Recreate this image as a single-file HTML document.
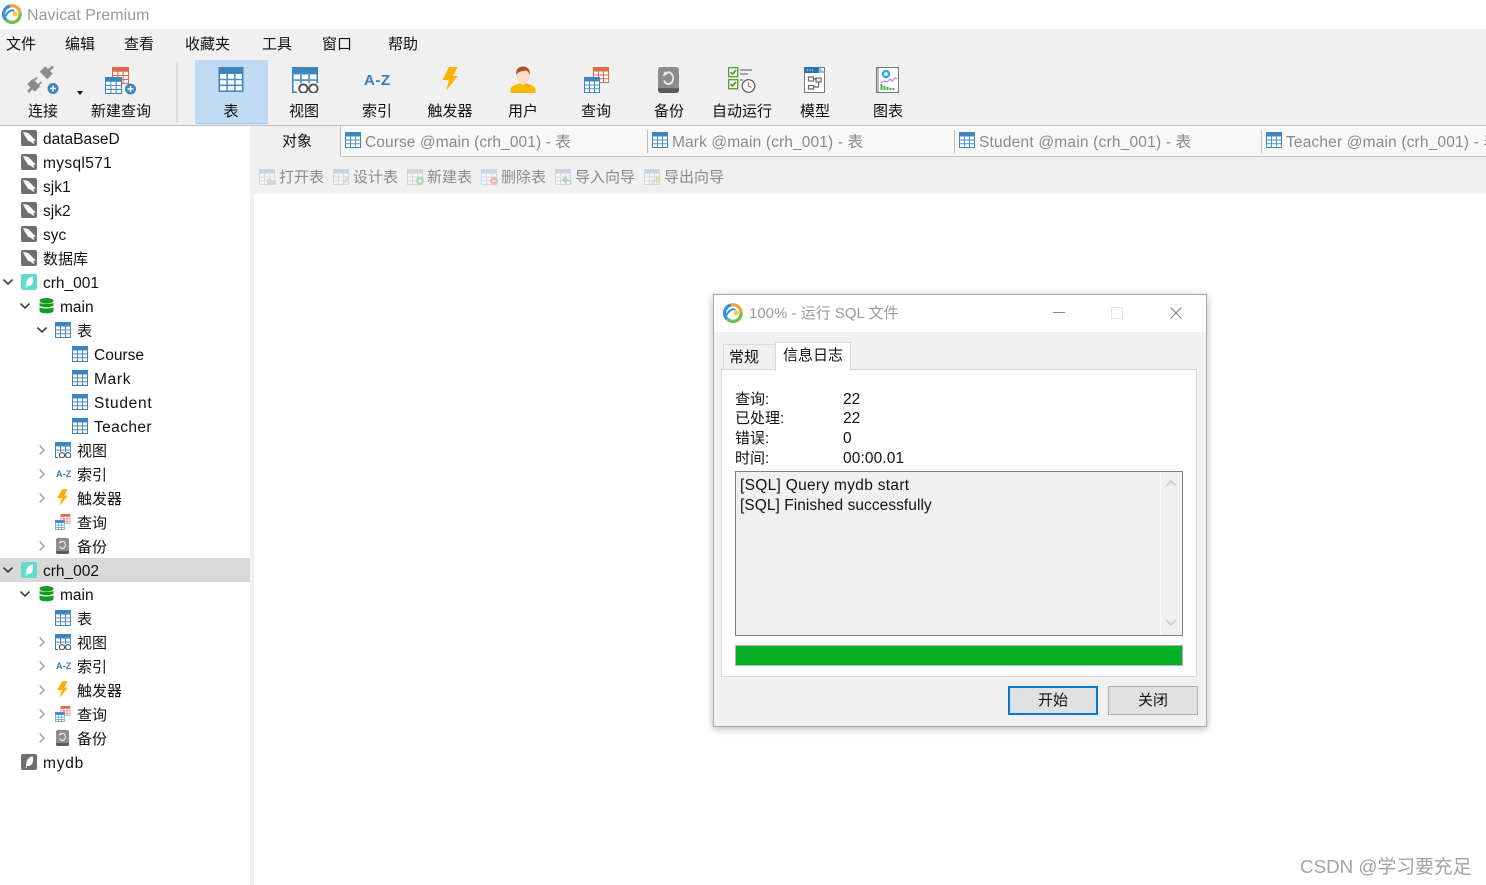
<!DOCTYPE html>
<html lang="zh"><head><meta charset="utf-8"><title>Navicat Premium</title>
<style>
html,body{margin:0;padding:0;background:#fff}
#p{position:relative;width:1486px;height:885px;overflow:hidden;background:#fff;font-family:"Liberation Sans","Noto Sans CJK SC",sans-serif;color:#111}
.b{position:absolute}
.t{position:absolute;white-space:nowrap;line-height:20px;font-size:15px}
.c{transform:translateX(-50%)}
.r{position:absolute;left:0;width:250px;height:24px}
.r .t{top:4px;font-size:15.5px}
.r .t.k{top:4px;font-size:15px}
.r .t.az{top:2px;left:56px;font:bold 9px/20px "Liberation Sans",sans-serif;color:#3a7ab5;letter-spacing:.1px}
svg{position:absolute;overflow:visible}
.r svg{top:4px}
.g{color:#8a8a8a}
.ti{opacity:.75}
</style></head><body>
<div id="p">
<svg width="0" height="0" style="position:absolute">
<defs>
<symbol id="tb" viewBox="0 0 16 16"><rect x=".5" y=".5" width="15" height="15" fill="#fff" stroke="#3d85c0"/><rect width="16" height="4.5" rx="1" fill="#3d85c0"/><path d="M5.5 4v11M10.5 4v11M1 8h14M1 11.7h14" stroke="#4a8fcb" fill="none"/></symbol>
<symbol id="rd" viewBox="0 0 16 16"><rect x=".5" y=".5" width="15" height="15" fill="#fff" stroke="#dd6a4e"/><rect width="16" height="4.5" rx="1" fill="#dd6a4e"/><path d="M5.5 4v11M10.5 4v11M1 8h14M1 11.7h14" stroke="#dd6a4e" fill="none"/></symbol>
<symbol id="tf" viewBox="0 0 16 16"><rect x=".5" y=".5" width="15" height="15" fill="#f7f7f7" stroke="#c3ced8"/><rect width="16" height="4.5" fill="#bccbd8"/><path d="M5.5 4v11M10.5 4v11M1 8h14M1 11.7h14" stroke="#c9d4de" fill="none"/></symbol>
<symbol id="vw" viewBox="0 0 16 16"><rect x=".5" y=".5" width="15" height="15" fill="#fff" stroke="#3d85c0"/><rect width="16" height="4.5" rx="1" fill="#3d85c0"/><path d="M5.5 4v7M10.5 4v7M1 8h14" stroke="#4a8fcb" fill="none"/><rect x="3" y="10" width="14" height="7" fill="#f4f4f4"/><circle cx="7" cy="13.3" r="2.6" fill="#fff" stroke="#555" stroke-width="1.2"/><circle cx="13.2" cy="13.3" r="2.6" fill="#fff" stroke="#555" stroke-width="1.2"/></symbol>
<symbol id="bolt" viewBox="0 0 16 24"><path d="M7 0h8.5L11 9h4.6L4 24l3-11H.5z" fill="#f9b000"/></symbol>
<symbol id="qr" viewBox="0 0 26 26"><use href="#rd" x="9" y="0" width="16" height="16"/><use href="#tb" x="0" y="10" width="16" height="16"/></symbol>
<symbol id="bk" viewBox="0 0 16 16" preserveAspectRatio="none"><rect width="16" height="16" rx="2" fill="#8c8c8c"/><path d="M0 13h16v1a2 2 0 0 1-2 2H2a2 2 0 0 1-2-2z" fill="#5a5a5a"/><path d="M5.2 4.6a3.6 3.6 0 1 1-.6 3.6" fill="none" stroke="#eee" stroke-width="1.2"/><path d="M3.4 5.8l3.3-1-1.6-2.2z" fill="#eee"/></symbol>
<symbol id="my" viewBox="0 0 16 16"><rect width="16" height="16" rx="2" fill="#6e6e6e"/><path d="M2 2c3 0 5.500 1 7.500 3 1.500 1.500 2.500 3 4.500 4.500l.5 1.500-2-.5c0 1.500.5 2.500 1 3.500-2-.5-3.500-1.500-4.500-3-1 .5-2 0-2.500-1C5.500 8 3 5 2 2z" fill="#fff"/></symbol>
<symbol id="lf" viewBox="0 0 16 16"><rect width="16" height="16" rx="2" fill="#5fdcd0"/><path d="M11.600 2.400c-3.600 .6-6 3.400-6.400 7-.1 1 0 1.800 .1 2.200L4.400 14l.7 .3 1-2.300c3.400 .4 5.800-1.800 6-5.400.1-1.700-.1-3.200-.5-4.200z" fill="#fff"/></symbol>
<symbol id="lg" viewBox="0 0 16 16"><rect width="16" height="16" rx="2" fill="#6e6e6e"/><path d="M11.600 2.400c-3.600 .6-6 3.400-6.400 7-.1 1 0 1.800 .1 2.200L4.400 14l.7 .3 1-2.300c3.400 .4 5.800-1.800 6-5.400.1-1.700-.1-3.200-.5-4.200z" fill="#fff"/></symbol>
<symbol id="db" viewBox="0 0 15 16"><ellipse cx="7.500" cy="2.800" rx="7" ry="2.800" fill="#0f9d1f"/><path d="M.5 4.800c1.500 1.600 12.500 1.600 14 0v2.700c-1 2.200-13 2.200-14 0z" fill="#0f9d1f"/><path d="M.5 9.300c1.500 1.600 12.500 1.600 14 0v3.700c-1 3.200-13 3.200-14 0z" fill="#0f9d1f"/></symbol>
<symbol id="logo" viewBox="0 0 22 22"><path d="M4.500 17.500A9 9 0 0 1 9 2.200" fill="none" stroke="#3b8fe0" stroke-width="3.600"/><path d="M9 2.200A9 9 0 0 1 19.900 10" fill="none" stroke="#f2a533" stroke-width="3.600"/><path d="M19.900 10A9 9 0 0 1 4.500 17.500" fill="none" stroke="#6cc24a" stroke-width="3.600"/><path d="M4 13.500C6.500 8 11 5.500 13.500 7.800" fill="none" stroke="#3b8fe0" stroke-width="2.200"/><circle cx="14.500" cy="11" r="2.800" fill="#f7c94b"/></symbol>
<symbol id="ca" viewBox="0 0 10 6"><path d="M.5 .5L5 5l4.500-4.500" fill="none" stroke="#444" stroke-width="1.700"/></symbol>
<symbol id="cr" viewBox="0 0 6 10"><path d="M.7 .5L5 5 .7 9.500" fill="none" stroke="#aaa" stroke-width="1.700"/></symbol>
</defs>
</svg>

<!-- title -->
<svg style="left:2px;top:4px" width="20" height="20"><use href="#logo" width="20" height="20"/></svg>
<div class="t" style="left:27px;top:6px;font-size:16px;letter-spacing:.05px;color:#9a9a9a">Navicat Premium</div>

<!-- menu/toolbar -->
<div class="b" style="left:0;top:29px;width:1486px;height:96px;background:#f0f0f0"></div>
<div class="b" style="left:0;top:125px;width:1486px;height:1px;background:#bdbdbd"></div>
<div class="t" style="left:6px;top:35px">文件</div>
<div class="t" style="left:65px;top:35px">编辑</div>
<div class="t" style="left:124px;top:35px">查看</div>
<div class="t" style="left:185px;top:35px">收藏夹</div>
<div class="t" style="left:262px;top:35px">工具</div>
<div class="t" style="left:322px;top:35px">窗口</div>
<div class="t" style="left:388px;top:35px">帮助</div>

<div class="b" style="left:176px;top:61px;width:2px;height:62px;background:#dcdcdc"></div>
<div class="b" style="left:195px;top:60px;width:73px;height:64px;background:#bfdbf3;border-bottom:1px solid #9cc5e8;box-sizing:border-box"></div>

<!-- connect -->
<svg style="left:28px;top:67px" width="32" height="28" viewBox="0 0 32 28">
<g stroke="#8c8c8c" fill="none">
<path d="M3 21l5.500-5.500" stroke-width="10.500"/><path d="M15.500 8.500l5.500-5.500" stroke-width="10.500"/>
<path d="M0 25l4-4M21 3l4-3.500" stroke-width="2.800"/>
<path d="M6 13.500l3-3M10.500 18l3-3" stroke-width="1.800"/></g>
<circle cx="25" cy="21.500" r="5.500" fill="#3d85c0"/><path d="M22 21.500h6M25 18.500v6" stroke="#fff" stroke-width="1.500"/></svg>
<div class="b" style="left:77px;top:91px;width:0;height:0;border:3px solid transparent;border-top:4px solid #111"></div>
<div class="t c" style="left:43px;top:102px">连接</div>
<!-- new query -->
<svg style="left:105px;top:67px" width="32" height="28" viewBox="0 0 32 28">
<use href="#rd" x="7" y="0" width="17" height="17"/><use href="#tb" x="0" y="10" width="17" height="17"/><circle cx="25.500" cy="22" r="5.500" fill="#3d85c0"/><path d="M22.500 22h6M25.500 19v6" stroke="#fff" stroke-width="1.500"/></svg>
<div class="t c" style="left:121px;top:102px">新建查询</div>

<svg style="left:218px;top:67px" width="26" height="25"><use href="#tb" width="26" height="25"/></svg>
<div class="t c" style="left:231px;top:102px">表</div>
<svg style="left:291px;top:67px" width="28" height="26"><use href="#vw" width="28" height="26"/></svg>
<div class="t c" style="left:304px;top:102px">视图</div>
<div class="t" style="left:364px;top:71px;font:bold 15px/20px 'Liberation Sans',sans-serif;color:#3a7ab5;letter-spacing:.6px">A-Z</div>
<div class="t c" style="left:377px;top:102px">索引</div>
<svg style="left:442px;top:67px" width="16" height="24"><use href="#bolt" width="16" height="24"/></svg>
<div class="t c" style="left:450px;top:102px">触发器</div>
<!-- user -->
<svg style="left:510px;top:66px" width="26" height="28" viewBox="0 0 26 28"><path d="M0 27v-4c1-3.500 5-4 8-5.500h9c3 1.500 7 2 8 5.500v4z" fill="#f8b800" transform="translate(.5 0)"/><path d="M9 16l4 3.500 4-3.500v-2H9z" fill="#fde3cf"/><ellipse cx="13" cy="9" rx="6.500" ry="8" fill="#fbdcc6"/><path d="M6.300 9C5.500 3 9 .5 13 .5S20.500 3 19.700 9c-1-3-2.500-4.500-5-4.500-2.500 1-6 .5-8.400 4.500z" fill="#a5551f"/></svg>
<div class="t c" style="left:523px;top:102px">用户</div>
<svg style="left:584px;top:67px" width="26" height="26"><use href="#qr" width="26" height="26"/></svg>
<div class="t c" style="left:596px;top:102px">查询</div>
<svg style="left:658px;top:67px" width="21" height="26"><use href="#bk" width="21" height="26"/></svg>
<div class="t c" style="left:669px;top:102px">备份</div>
<!-- auto run -->
<svg style="left:728px;top:67px" width="28" height="27" viewBox="0 0 28 27">
<g fill="#fff" stroke="#5f9f35" stroke-width="1.400"><rect x=".7" y=".7" width="9" height="9"/><rect x=".7" y="12.700" width="9" height="9"/></g>
<path d="M2.500 5l2 2 3.500-4M2.500 17l2 2 3.500-4" fill="none" stroke="#5f9f35" stroke-width="1.800"/>
<path d="M12 3h12M12 7h8" stroke="#9a9a9a" stroke-width="1.800"/><path d="M12 13h3" stroke="#9a9a9a" stroke-width="1.800"/>
<circle cx="20.500" cy="19" r="6.300" fill="#fff" stroke="#555" stroke-width="1.200"/><path d="M20.500 15v4l3 1.500" fill="none" stroke="#b9524a"/></svg>
<div class="t c" style="left:742px;top:102px">自动运行</div>
<!-- model -->
<svg style="left:804px;top:67px" width="21" height="26" viewBox="0 0 21 26"><rect x=".5" y=".5" width="20" height="25" fill="#fff" stroke="#777"/><path d="M0 0h15l6 6v0H0z" fill="#2e75b0"/><path d="M15 0l6 6h-6z" fill="#8dc0ea"/><path d="M3 3h1M5.500 3h1M8 3h1" stroke="#fff"/><g fill="none" stroke="#666" stroke-width="1.200"><rect x="4.500" y="10" width="5" height="4"/><rect x="12" y="11" width="5" height="4"/><rect x="4.500" y="18.500" width="5" height="3.500"/><path d="M9.500 12h2.500M14.500 15v5H9.500"/></g></svg>
<div class="t c" style="left:815px;top:102px">模型</div>
<!-- chart -->
<svg style="left:876px;top:67px" width="23" height="26" viewBox="0 0 23 26"><rect x=".5" y=".5" width="22" height="25" fill="#fff" stroke="#777"/><path d="M2 1v24" stroke="#777"/><circle cx="10" cy="7" r="3" fill="none" stroke="#35a4dd" stroke-width="2.400"/><path d="M5 16l3-2 3 1 3-3 2 2 3-3 2 1" fill="none" stroke="#c27cd8" stroke-width="1.200"/><path d="M5.500 17v6M8.500 19v4M11.500 20v3M14.500 21v2M17.500 21v2" stroke="#4cb53b" stroke-width="2"/></svg>
<div class="t c" style="left:888px;top:102px">图表</div>

<!-- right area -->
<div class="b" style="left:250px;top:126px;width:1236px;height:68px;background:#f0f0f0"></div>
<div class="b" style="left:250px;top:126px;width:4px;height:759px;background:#f0f0f0"></div>
<div class="b" style="left:341px;top:126px;width:1145px;height:30px;background:#f8f8f8"></div>
<div class="b" style="left:340px;top:126px;width:1px;height:30px;background:#bdbdbd"></div>
<div class="b" style="left:340px;top:156px;width:1146px;height:1px;background:#c4c4c4"></div>
<div class="b" style="left:647px;top:130px;width:1px;height:23px;background:#bdbdbd"></div>
<div class="b" style="left:954px;top:130px;width:1px;height:23px;background:#bdbdbd"></div>
<div class="b" style="left:1261px;top:130px;width:1px;height:23px;background:#bdbdbd"></div>
<div class="t" style="left:282px;top:132px">对象</div>
<svg style="left:345px;top:132px" width="16" height="16"><use href="#tb" width="16" height="16"/></svg>
<div class="t g" style="left:365px;top:133px;font-size:15.500px;letter-spacing:.09px">Course @main (crh_001) - 表</div>
<svg style="left:652px;top:132px" width="16" height="16"><use href="#tb" width="16" height="16"/></svg>
<div class="t g" style="left:672px;top:133px;font-size:15.500px;letter-spacing:.13px">Mark @main (crh_001) - 表</div>
<svg style="left:959px;top:132px" width="16" height="16"><use href="#tb" width="16" height="16"/></svg>
<div class="t g" style="left:979px;top:133px;font-size:15.500px;letter-spacing:.2px">Student @main (crh_001) - 表</div>
<svg style="left:1266px;top:132px" width="16" height="16"><use href="#tb" width="16" height="16"/></svg>
<div class="t g" style="left:1286px;top:133px;font-size:15.500px;letter-spacing:.16px;width:200px;overflow:hidden">Teacher @main (crh_001) - 表</div>

<svg class="ti" style="left:259px;top:169px" width="18" height="17" viewBox="0 0 18 17"><use href="#tf" width="16" height="16"/><path d="M8 10h4l1 1h4v5H8z" fill="#c3cdd6"/></svg>
<div class="t g" style="left:279px;top:168px">打开表</div>
<svg class="ti" style="left:333px;top:169px" width="18" height="17" viewBox="0 0 18 17"><use href="#tf" width="16" height="16"/><path d="M9 15l1-3 5-5 2 2-5 5z" fill="#cfcfcf"/></svg>
<div class="t g" style="left:353px;top:168px">设计表</div>
<svg class="ti" style="left:407px;top:169px" width="18" height="17" viewBox="0 0 18 17"><use href="#tf" width="16" height="16"/><circle cx="13" cy="12" r="4" fill="#9fd09a"/><path d="M11 12h4M13 10v4" stroke="#fff"/></svg>
<div class="t g" style="left:427px;top:168px">新建表</div>
<svg class="ti" style="left:481px;top:169px" width="18" height="17" viewBox="0 0 18 17"><use href="#tf" width="16" height="16"/><circle cx="13" cy="12" r="4" fill="#eaa9a0"/><path d="M11 12h4" stroke="#fff"/></svg>
<div class="t g" style="left:501px;top:168px">删除表</div>
<svg class="ti" style="left:555px;top:169px" width="18" height="17" viewBox="0 0 18 17"><use href="#tf" width="16" height="16"/><path d="M16 15c0-3-2-4-5-4M11 8.500L8 11l3 2.500z" fill="none" stroke="#9fc99b" stroke-width="1.500"/></svg>
<div class="t g" style="left:575px;top:168px">导入向导</div>
<svg class="ti" style="left:644px;top:169px" width="18" height="17" viewBox="0 0 18 17"><use href="#tf" width="16" height="16"/><path d="M8 15c0-3 2-4 5-4M13 8.500l3 2.500-3 2.500z" fill="none" stroke="#e5c79a" stroke-width="1.500"/></svg>
<div class="t g" style="left:664px;top:168px">导出向导</div>

<!-- tree -->
<div class="r" style="top:126px"><svg style="left:21px" width="16" height="16"><use href="#my" width="16" height="16"/></svg><div class="t" style="left:43px">dataBaseD</div></div>
<div class="r" style="top:150px"><svg style="left:21px" width="16" height="16"><use href="#my" width="16" height="16"/></svg><div class="t" style="left:43px;letter-spacing:.35px">mysql571</div></div>
<div class="r" style="top:174px"><svg style="left:21px" width="16" height="16"><use href="#my" width="16" height="16"/></svg><div class="t" style="left:43px">sjk1</div></div>
<div class="r" style="top:198px"><svg style="left:21px" width="16" height="16"><use href="#my" width="16" height="16"/></svg><div class="t" style="left:43px">sjk2</div></div>
<div class="r" style="top:222px"><svg style="left:21px" width="16" height="16"><use href="#my" width="16" height="16"/></svg><div class="t" style="left:43px">syc</div></div>
<div class="r" style="top:246px"><svg style="left:21px" width="16" height="16"><use href="#my" width="16" height="16"/></svg><div class="t k" style="left:43px">数据库</div></div>
<div class="r" style="top:270px"><svg style="left:3px;top:9px" width="10" height="6"><use href="#ca" width="10" height="6"/></svg><svg style="left:21px" width="16" height="16"><use href="#lf" width="16" height="16"/></svg><div class="t" style="left:43px">crh_001</div></div>
<div class="r" style="top:294px"><svg style="left:20px;top:9px" width="10" height="6"><use href="#ca" width="10" height="6"/></svg><svg style="left:39px" width="15" height="16"><use href="#db" width="15" height="16"/></svg><div class="t" style="left:60px">main</div></div>
<div class="r" style="top:318px"><svg style="left:37px;top:9px" width="10" height="6"><use href="#ca" width="10" height="6"/></svg><svg style="left:55px" width="16" height="16"><use href="#tb" width="16" height="16"/></svg><div class="t k" style="left:77px">表</div></div>
<div class="r" style="top:342px"><svg style="left:72px" width="16" height="16"><use href="#tb" width="16" height="16"/></svg><div class="t" style="left:94px">Course</div></div>
<div class="r" style="top:366px"><svg style="left:72px" width="16" height="16"><use href="#tb" width="16" height="16"/></svg><div class="t" style="left:94px;letter-spacing:.7px">Mark</div></div>
<div class="r" style="top:390px"><svg style="left:72px" width="16" height="16"><use href="#tb" width="16" height="16"/></svg><div class="t" style="left:94px;letter-spacing:.7px">Student</div></div>
<div class="r" style="top:414px"><svg style="left:72px" width="16" height="16"><use href="#tb" width="16" height="16"/></svg><div class="t" style="left:94px;letter-spacing:.4px">Teacher</div></div>
<div class="r" style="top:438px"><svg style="left:39px;top:7px" width="6" height="10"><use href="#cr" width="6" height="10"/></svg><svg style="left:55px" width="16" height="16"><use href="#vw" width="16" height="16"/></svg><div class="t k" style="left:77px">视图</div></div>
<div class="r" style="top:462px"><svg style="left:39px;top:7px" width="6" height="10"><use href="#cr" width="6" height="10"/></svg><div class="t az">A-Z</div><div class="t k" style="left:77px">索引</div></div>
<div class="r" style="top:486px"><svg style="left:39px;top:7px" width="6" height="10"><use href="#cr" width="6" height="10"/></svg><svg style="left:57px;top:3px" width="11" height="17"><use href="#bolt" width="11" height="17"/></svg><div class="t k" style="left:77px">触发器</div></div>
<div class="r" style="top:510px"><svg style="left:55px" width="16" height="16"><use href="#qr" width="16" height="16"/></svg><div class="t k" style="left:77px">查询</div></div>
<div class="r" style="top:534px"><svg style="left:39px;top:7px" width="6" height="10"><use href="#cr" width="6" height="10"/></svg><svg style="left:56px" width="13" height="16"><use href="#bk" width="13" height="16"/></svg><div class="t k" style="left:77px">备份</div></div>
<div class="r" style="top:558px;background:#d9d9d9"><svg style="left:3px;top:9px" width="10" height="6"><use href="#ca" width="10" height="6"/></svg><svg style="left:21px" width="16" height="16"><use href="#lf" width="16" height="16"/></svg><div class="t" style="left:43px">crh_002</div></div>
<div class="r" style="top:582px"><svg style="left:20px;top:9px" width="10" height="6"><use href="#ca" width="10" height="6"/></svg><svg style="left:39px" width="15" height="16"><use href="#db" width="15" height="16"/></svg><div class="t" style="left:60px">main</div></div>
<div class="r" style="top:606px"><svg style="left:55px" width="16" height="16"><use href="#tb" width="16" height="16"/></svg><div class="t k" style="left:77px">表</div></div>
<div class="r" style="top:630px"><svg style="left:39px;top:7px" width="6" height="10"><use href="#cr" width="6" height="10"/></svg><svg style="left:55px" width="16" height="16"><use href="#vw" width="16" height="16"/></svg><div class="t k" style="left:77px">视图</div></div>
<div class="r" style="top:654px"><svg style="left:39px;top:7px" width="6" height="10"><use href="#cr" width="6" height="10"/></svg><div class="t az">A-Z</div><div class="t k" style="left:77px">索引</div></div>
<div class="r" style="top:678px"><svg style="left:39px;top:7px" width="6" height="10"><use href="#cr" width="6" height="10"/></svg><svg style="left:57px;top:3px" width="11" height="17"><use href="#bolt" width="11" height="17"/></svg><div class="t k" style="left:77px">触发器</div></div>
<div class="r" style="top:702px"><svg style="left:39px;top:7px" width="6" height="10"><use href="#cr" width="6" height="10"/></svg><svg style="left:55px" width="16" height="16"><use href="#qr" width="16" height="16"/></svg><div class="t k" style="left:77px">查询</div></div>
<div class="r" style="top:726px"><svg style="left:39px;top:7px" width="6" height="10"><use href="#cr" width="6" height="10"/></svg><svg style="left:56px" width="13" height="16"><use href="#bk" width="13" height="16"/></svg><div class="t k" style="left:77px">备份</div></div>
<div class="r" style="top:750px"><svg style="left:21px" width="16" height="16"><use href="#lg" width="16" height="16"/></svg><div class="t" style="left:43px;letter-spacing:.8px">mydb</div></div>

<!-- dialog -->
<div class="b" style="left:713px;top:294px;width:494px;height:433px;box-sizing:border-box;background:#f0f0f0;border:1px solid #a8a8a8;box-shadow:0 2px 8px rgba(0,0,0,.28)"></div>
<div class="b" style="left:714px;top:295px;width:492px;height:37px;background:#fff"></div>
<svg style="left:723px;top:303px" width="20" height="20"><use href="#logo" width="20" height="20"/></svg>
<div class="t" style="left:749px;top:304px;font-size:15px;color:#9a9a9a">100% - 运行 SQL 文件</div>
<div class="b" style="left:1053px;top:312px;width:12px;height:1px;background:#8a8a8a"></div>
<div class="b" style="left:1111px;top:307px;width:10px;height:10px;border:1px solid #e4e4e4"></div>
<svg style="left:1170px;top:307px" width="12" height="12"><path d="M.5 .5l11 11M11.500 .5l-11 11" stroke="#777" fill="none"/></svg>

<div class="b" style="left:723px;top:344px;width:53px;height:26px;box-sizing:border-box;background:#f0f0f0;border:1px solid #d9d9d9;border-bottom:none"></div>
<div class="b" style="left:721px;top:369px;width:476px;height:308px;box-sizing:border-box;background:#fff;border:1px solid #d9d9d9"></div>
<div class="b" style="left:775px;top:342px;width:76px;height:29px;box-sizing:border-box;background:#fff;border:1px solid #d9d9d9;border-bottom:none"></div>
<div class="t" style="left:729px;top:348px">常规</div>
<div class="t" style="left:783px;top:346px">信息日志</div>

<div class="t" style="left:735px;top:390px">查询:</div><div class="t" style="left:843px;top:390px;font-size:15.500px">22</div>
<div class="t" style="left:735px;top:409px">已处理:</div><div class="t" style="left:843px;top:409px;font-size:15.500px">22</div>
<div class="t" style="left:735px;top:429px">错误:</div><div class="t" style="left:843px;top:429px;font-size:15.500px">0</div>
<div class="t" style="left:735px;top:449px">时间:</div><div class="t" style="left:843px;top:449px;font-size:15.500px;letter-spacing:.1px">00:00.01</div>

<div class="b" style="left:735px;top:471px;width:448px;height:165px;box-sizing:border-box;background:#f0f0f0;border:1px solid #808080"></div>
<div class="b" style="left:1160px;top:472px;width:1px;height:163px;background:#fff"></div>
<div class="t" style="left:740px;top:476px;font-size:15.500px;letter-spacing:.3px">[SQL] Query mydb start</div>
<div class="t" style="left:740px;top:496px;font-size:15.500px;letter-spacing:.05px">[SQL] Finished successfully</div>
<svg style="left:1166px;top:480px" width="10" height="6"><path d="M.5 5.500L5 1l4.500 4.500" fill="none" stroke="#c8c8c8" stroke-width="1.600"/></svg>
<svg style="left:1166px;top:620px" width="10" height="6"><path d="M.5 .5L5 5l4.500-4.500" fill="none" stroke="#c8c8c8" stroke-width="1.600"/></svg>

<div class="b" style="left:735px;top:645px;width:448px;height:21px;box-sizing:border-box;background:#06b025;border:1px solid #b4b4b4"></div>

<div class="b" style="left:1008px;top:686px;width:90px;height:29px;box-sizing:border-box;background:#e1e1e1;border:2px solid #0078d7"></div>
<div class="t c" style="left:1053px;top:691px">开始</div>
<div class="b" style="left:1108px;top:686px;width:90px;height:29px;box-sizing:border-box;background:#e1e1e1;border:1px solid #adadad"></div>
<div class="t c" style="left:1153px;top:691px">关闭</div>

<div class="t" style="left:1300px;top:857px;font-size:18.800px;color:#a3a3a3">CSDN @学习要充足</div>
</div>
</body></html>
